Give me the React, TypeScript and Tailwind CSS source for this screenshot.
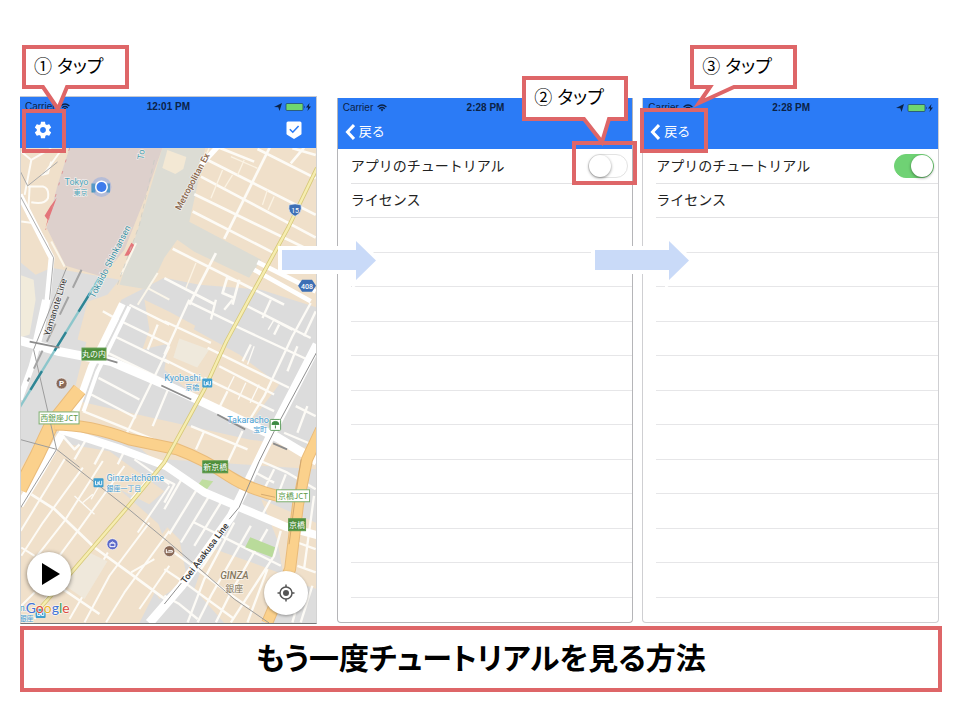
import type { ReactNode } from "react";

const sans = "font-['Liberation_Sans','Noto_Sans_CJK_JP',sans-serif]";

/* ---------- status bar ---------- */

function Wifi() {
  return (
    <svg viewBox="0 0 10 8" className="h-2 w-2.5" fill="none" stroke="#0b2246" strokeWidth="1.3" aria-hidden="true">
      <path d="M0.6 3 Q5 -1 9.4 3" />
      <path d="M2.2 4.7 Q5 2.2 7.8 4.7" />
      <path d="M3.6 5.6 L5 7.4 L6.4 5.6 Q5 4.6 3.6 5.6Z" fill="#0b2246" stroke="none" />
    </svg>
  );
}

function Battery() {
  return (
    <svg viewBox="0 0 38 10" className="h-2.5 w-[38px]" aria-hidden="true">
      <path d="M0 5 L8 1 L5.5 9 L4.3 5.2Z" fill="#0b2246" />
      <rect x="12" y="1.5" width="17" height="7" rx="1" fill="#6fd66f" stroke="#1c3f63" strokeWidth=".7" />
      <path d="M30.2 3.5 v3 q1.2 -1.5 0 -3Z" fill="#0b2246" />
      <path d="M35.5 1 L32 5.4 H34.2 L33.5 9 L37 4.4 H34.8Z" fill="#0b2246" />
    </svg>
  );
}

function StatusBar({ time }: { time: string }) {
  return (
    <div className="grid h-[19px] grid-cols-3 items-center pr-1 pl-[5px] text-[10px] leading-3 text-[#0b2246]">
      <span className="flex items-center gap-1">
        Carrier <Wifi />
      </span>
      <span className="text-center font-bold">{time}</span>
      <span className="flex justify-end">
        <Battery />
      </span>
    </div>
  );
}

/* ---------- annotations ---------- */

function Callout({ place, num, outline }: { place: string; num: string; outline: string }) {
  return (
    <div className={`pointer-events-none absolute z-20 h-11 w-[107px] ${place}`}>
      <svg viewBox="0 0 107 68" className="absolute top-0 left-0 h-[68px] w-[107px] overflow-visible" aria-hidden="true">
        <path d={outline} fill="#fff" stroke="#de6668" strokeWidth="4" />
      </svg>
      <p className="relative flex h-full items-center pl-3 text-lg leading-6 whitespace-pre text-black [font-feature-settings:'palt']">
        {num} タップ
      </p>
    </div>
  );
}

function Highlight({ place }: { place: string }) {
  return <div className={`pointer-events-none absolute z-10 border-4 border-[#de6668] ${place}`} />;
}

function StepArrow({ place }: { place: string }) {
  const d = "M0 9 H74 V0 L94 19.5 L74 39 V29 H0Z";
  return (
    <svg viewBox="0 0 94 39" className={`absolute z-10 h-[39px] w-[94px] overflow-visible ${place}`} aria-hidden="true">
      <path d={d} fill="#fff" stroke="#fff" strokeWidth="8" />
      <path d={d} fill="#c9daf8" />
    </svg>
  );
}

/* ---------- map ---------- */

const JP = "'Noto Sans CJK JP', sans-serif";

function Tile({ x, y, children }: { x: number; y: number; children: ReactNode }) {
  return <g transform={`translate(${x} ${y}) scale(0.33333)`}>{children}</g>;
}

function Sign({ x, y, w, text, solid }: { x: number; y: number; w: number; text: string; solid?: boolean }) {
  return (
    <g>
      <rect x={x + 0.5} y={y + 0.5} width={w - 1} height="12" fill={solid ? "#4f8f3c" : "#fff"} stroke={solid ? "#5f9c4e" : "#7fb070"} />
      <text x={x + w / 2} y={y + 9.5} fontSize="8" textAnchor="middle" fill={solid ? "#fff" : "#5d9a4a"} fontFamily={JP}>
        {text}
      </text>
    </g>
  );
}

function Metro({ x, y }: { x: number; y: number }) {
  return (
    <g>
      <rect x={x} y={y} width="10" height="9" rx="1" fill="#3f9fd0" />
      <path d={`M${x + 2} ${y + 2.5} v4 h2.4 v-3 l1.4 3 v-4 M${x + 6.4} ${y + 6.5} h1.8 v-4`} stroke="#fff" fill="none" strokeWidth=".9" />
    </g>
  );
}

function CityMap() {
  return (
    <svg
      viewBox="20 148 298 476"
      preserveAspectRatio="xMidYMid slice"
      className="block h-full w-full"
      role="img"
      aria-label="地図"
      fontFamily="Roboto, 'Noto Sans CJK JP', sans-serif"
    >
      <rect x="20" y="148" width="298" height="476" fill="#f0e0ca" />

      {/* city blocks */}
      <path d="M20 262 L36 275 L52 268 L120 280 L104 300 L90 330 L75 390 L40 440 L20 470Z" fill="#dddddd" />
      <path d="M20 275 L34 280 L36 300 L30 335 L20 338Z" fill="#f1ebdb" />
      <path d="M165 278 L200 285 L262 290 L318 308 V450 L250 440 L80 402 L100 350 L122 300Z" fill="#dcdcdc" />
      <path d="M88 302 L122 290 L110 335 L95 345 L78 340Z" fill="#f0e0ca" />
      <path d="M145 300 L170 312 L196 326 L186 350 L165 345 L143 350 L150 330Z" fill="#f0e0ca" />
      <path d="M170 340 L186 325 L240 355 L280 385 L252 422 L204 405 L165 370Z" fill="#f0e0ca" />
      <path d="M180 339 L210 350 L198 368 L174 358Z" fill="#efe9dc" />
      <path d="M165 460 L318 470 V624 H140 L172 560 L150 500 L146 486Z" fill="#dddddd" />
      <path d="M55 432 L130 440 L190 490 L165 530 L120 490Z" fill="#dddddd" />
      <path d="M70 445 L110 452 L165 492 L150 505 L100 480Z" fill="#f0e0ca" />
      <path d="M168 528 L180 540 L188 580 L160 600 L140 565Z" fill="#f0e0ca" />
      <path d="M210 548 L252 563 L283 575 L262 624 H225 L195 590Z" fill="#f0e0ca" />
      <path d="M262 500 L318 524 V590 L285 580 L278 540Z" fill="#f0e0ca" />
      <path d="M163 148 L206 148 L196 195 L190 222 L262 260 L250 278 L195 252 L178 240 L165 258 L150 290 L120 285 L140 225Z" fill="#dcdcd4" />
      <path d="M168 150 L187 157 L184 169 L176 174 L163 168Z" fill="#f3e8d4" />
      <path d="M70 148 L163 148 L144 202 L125 250 L103 277 L66 266 L47 228 L58 185Z" fill="#ddd0cc" />
      <path d="M51 206 L45 216 L48 220 L46 228 L57 198Z" fill="#e4757a" />
      <path d="M70 148 L46 230" stroke="#e08a8a" strokeWidth=".8" strokeDasharray="3 9" fill="none" />
      <path d="M132 243 L125 256 L129 256 L136 246Z" fill="#e4757a" />

      {/* minor streets */}
      <g stroke="#fdfbf6" fill="none" strokeLinejoin="round">
        <Tile x={15} y={145}>
          <path strokeWidth="6" d="M20 20 L50 45 L110 10 M50 45 L30 150 M90 85 L140 15 M80 90 L100 85 L110 50 M40 125 L85 125 Q105 130 100 160 Q90 180 50 172 M45 125 L40 215 M20 230 L60 235 L100 300" />
          <path strokeWidth="6" d="M365 295 L320 390 M430 385 L370 480 M400 430 L465 465 M110 290 L150 365" stroke="#fbf6ea" />
        </Tile>
        <Tile x={165} y={145}>
          <path
            strokeWidth="8"
            d="M130 45 L455 210 M110 95 L455 278 M90 148 L455 325 M85 200 L330 325 M165 8 L270 50 M280 12 L455 100 M420 8 L380 55 M385 10 L455 30 M318 5 L180 282 M25 312 L270 435 L360 480 M155 325 L75 480 M0 400 L150 478 M190 395 L175 445 L210 460 M225 405 L205 480 M190 400 L225 412"
          />
          <path strokeWidth="4" d="M175 75 L140 160 M205 90 L180 130 M240 45 L220 90 M200 35 L280 70 M310 135 L295 180 M330 155 L312 195 M95 355 L65 430 M135 8 L100 90" stroke="#fbf3e4" />
          <path strokeWidth="14" stroke="#fff" d="M280 352 L455 440 M270 375 L440 470" />
          <path strokeWidth="16" stroke="#fff" d="M165 0 L110 60" />
        </Tile>
        <Tile x={15} y={300}>
          <path
            strokeWidth="7"
            d="M345 15 L465 75 M320 65 L465 135 M300 110 L465 190 M280 160 L465 250 M252 235 L375 300 M230 285 L365 355 M205 335 L430 425 M430 75 L400 150 M465 140 L335 405 M465 260 L415 380 M265 35 L310 60 M150 400 L120 450 M140 405 L180 450 L195 435 M215 420 L180 480 M270 440 L240 495 M330 455 L310 495"
          />
        </Tile>
        <Tile x={165} y={300}>
          <path
            strokeWidth="7"
            d="M75 0 L0 165 M70 5 L215 75 M215 80 L430 180 M250 20 L440 115 M300 45 L385 90 M0 65 L140 130 M130 145 L375 265 M165 200 L330 285 M120 235 L330 335 M320 0 L295 55 M440 10 L385 110 L300 290 L260 355 M345 75 L330 105 M260 135 L235 185 M190 275 L160 335 M0 180 L130 245 M155 0 L140 60 M400 140 L370 215 M455 35 L420 110 M80 380 L250 450 M120 395 L95 450 M235 395 L190 490 M395 320 L455 350 M360 400 L455 440 M430 320 L400 400 M180 30 L205 0"
          />
          <path strokeWidth="4" d="M270 140 L250 195 M210 230 L190 270 M245 250 L222 300 M285 255 L258 310 M330 60 L312 90" />
        </Tile>
        <Tile x={15} y={460}>
          <path
            strokeWidth="6"
            d="M150 0 L18 215 M205 25 L85 190 L20 290 M265 5 L150 185 L60 300 M330 20 L190 215 L120 310 M405 190 L285 350 L210 490 M465 215 L330 400 L275 490 M280 280 L165 480 M235 265 L165 350 M60 400 L10 450 M100 410 L60 480 M360 0 L465 75 M400 60 L350 120 M465 80 L370 220 M20 265 L60 290 M465 320 L375 450 M350 340 L420 300"
          />
          <path strokeWidth="8" d="M50 105 L120 150 L240 265 L350 345 L465 430 M130 380 L255 465" />
          <path strokeWidth="4" d="M180 110 L240 165 M230 120 L265 60 M205 130 L235 105" />
        </Tile>
        <Tile x={165} y={460}>
          <path
            strokeWidth="7"
            d="M0 60 L30 75 L0 130 M60 45 L0 150 M95 95 L15 225 M135 110 L50 250 M170 130 L90 260 M90 190 L170 230 L290 290 L350 320 M210 190 L120 360 L70 490 M260 200 L140 410 L100 490 M310 210 L200 400 L155 490 M350 215 L330 290 L200 490 M310 330 L250 490 M30 280 L110 340 L190 400 L255 445 M0 330 L60 370 L210 480 M50 380 L0 450 M170 240 L110 330 M290 5 L370 40 L455 90 M275 40 L330 70 M330 30 L300 90 M365 45 L340 110 M320 120 L290 175 M400 250 L455 270 M400 320 L455 340 M450 110 L420 330 M405 420 L385 490 M445 380 L410 490 M0 410 L45 435 L100 480"
          />
        </Tile>
      </g>

      {/* parks and plazas */}
      <path d="M87 552 L108 562 L85 600 L66 587Z" fill="#efe8db" />
      <path d="M251 538 L276 548 L273 558 L246 548Z" fill="#b9db9a" />
      <path d="M203 480 L214 482 L206 492 L197 488Z" fill="#c0dea0" />

      {/* main streets */}
      <g stroke="#fff" fill="none" strokeLinejoin="round">
        <path d="M20 195 L52 258 L48 300 L42 330 L32 367 L20 400" strokeWidth="6" />
        <path d="M45 300 L35 345" strokeWidth="5" />
        <path d="M20 341 L60 352 L112 362 L168 386 L198 400 L278 438 L318 462" strokeWidth="9" />
        <path d="M123 304 L103 345 L92 367 L76 412" strokeWidth="7" />
        <path d="M130 307 L108 352 L98 372 L84 412" strokeWidth="4" />
        <path d="M118 318 L97 360" strokeWidth="4" />
        <path d="M318 345 L278 423 L260 460 L232 517 L182 587 L150 624" strokeWidth="9" />
        <path d="M60 430 L122 450 L167 467 L205 493 L245 510 L288 528 L318 536" strokeWidth="8" />
        <path d="M62 435 L42 470 L20 506" strokeWidth="8" />
      </g>

      {/* expressways */}
      <g fill="none">
        <path d="M80 390 L52 425 L38 455 L20 490" stroke="#e9bb7a" strokeWidth="15" />
        <path d="M80 390 L52 425 L38 455 L20 490" stroke="#fbd18c" strokeWidth="13" />
        <path d="M55 425 Q90 425 130 440 L178 450 Q205 460 230 477 Q250 490 280 497" stroke="#e9bb7a" strokeWidth="12" />
        <path d="M55 425 Q90 425 130 440 L178 450 Q205 460 230 477 Q250 490 280 497" stroke="#fbd18c" strokeWidth="10" />
        <path d="M322 430 L308 460 L299 505 L291 570 L268 624" stroke="#e9bb7a" strokeWidth="12" />
        <path d="M322 430 L308 460 L299 505 L291 570 L268 624" stroke="#fbd18c" strokeWidth="10" />
        <path d="M302 460 L296 500 L290 545 M262 495 L276 498" stroke="#c9a069" strokeWidth=".8" />
        <path d="M318 168 L289 228 L248 303 L227 342 L205 390 L165 463 L128 508 L73 572 L38 612" stroke="#d6c878" strokeWidth="4" />
        <path d="M318 168 L289 228 L248 303 L227 342 L205 390 L165 463 L128 508 L73 572 L38 612" stroke="#f6edb0" strokeWidth="2.4" />
      </g>

      {/* railways */}
      <g fill="none">
        <path d="M20 195 L54 258 L50 300" stroke="#999" strokeWidth=".8" />
        <path d="M67 268 L34 350 L57 450 L20 510 M20 440 L57 450 L80 468 M66 460 L127 508 L168 542 L195 565 L235 600 L270 624" stroke="#9d9d9d" strokeWidth="1" />
        <path d="M82 270 L28 382" stroke="#a4a4a4" strokeWidth="2" strokeDasharray="20 10" />
        <path d="M58 162 L28 186 L20 170" stroke="#aaa" strokeWidth="1" />
        <path d="M100 278 L20 408" stroke="#8cc6cb" strokeWidth="2.4" />
        <path d="M100 278 L20 408" stroke="#2f8594" strokeWidth="2.4" strokeDasharray="22 24" strokeDashoffset="-18" />
        <path d="M318 352 L275 432 L260 462 L240 508 L230 520 M182 584 L165 605" stroke="#8f8f8f" strokeWidth="1" />
        <path d="M30 342 L60 348 M98 357 L118 363 M162 386 L192 400 M218 415 L246 430 M274 444 L288 450" stroke="#8c8c8c" strokeWidth="1.8" />
        <path d="M155 160 L140 225 L118 285" stroke="#c7c9c4" strokeWidth=".7" strokeDasharray="5 4" />
      </g>

      {/* rail line and road names */}
      <g stroke="#fff" strokeOpacity=".6" strokeWidth="1.5" paintOrder="stroke">
        <text fontSize="9" fontWeight="500" fill="#8a674d" transform="translate(181 211) rotate(-62)">Metropolitan Ex</text>
        <text fontSize="9" fill="#4d9fae" transform="translate(144 160) rotate(-82)">To</text>
        <text fontSize="9" fill="#3c93a3" transform="translate(95 299) rotate(-63)">Tokaido Shinkansen</text>
        <text fontSize="9" fill="#333" transform="translate(50 337) rotate(-73)">Yamanote Line</text>
        <text fontSize="9" fontWeight="500" fill="#333" transform="translate(186 585) rotate(-53)">Toei Asakusa Line</text>
        <g fill="#49a0d3">
          <text x="65" y="185" fontSize="9" fill="#52a5b8">Tokyo</text>
          <text x="74" y="195" fontSize="7" fill="#52a5b8">東京</text>
          <text x="165" y="382" fontSize="9">Kyobashi</text>
          <text x="186" y="391" fontSize="7">京橋</text>
          <text x="228" y="424" fontSize="9">Takaracho</text>
          <text x="254" y="433" fontSize="7">宝町</text>
          <text x="107" y="482" fontSize="9">Ginza-itchōme</text>
          <text x="107" y="492" fontSize="7">銀座一丁目</text>
          <text x="20" y="622" fontSize="7">銀座</text>
          <text x="20" y="612" fontSize="9">n.</text>
        </g>
        <text x="221" y="580" fontSize="10" fontStyle="italic" fontWeight="500" fill="#85785f">GINZA</text>
        <text x="226" y="593" fontSize="9" fill="#85785f">銀座</text>
      </g>

      {/* signs and places */}
      <Sign x={82} y={348} w={25} text="丸の内" solid />
      <Sign x={39} y={412} w={41} text="西銀座JCT" />
      <Sign x={203} y={461} w={26} text="新京橋" solid />
      <Sign x={277} y={490} w={34} text="京橋JCT" />
      <Sign x={289} y={519} w={18} text="京橋" solid />
      <Metro x={203} y={379} />
      <Metro x={94} y={479} />
      <Metro x={36} y={610} />
      <rect x="271" y="420" width="10.5" height="11" rx="1" fill="#fff" stroke="#5e9e5e" />
      <path d="M276.3 429 v-3 M272.8 425 q0 -3 3.5 -3 q3.5 0 3.5 3Z" fill="#3d8a43" stroke="#3d8a43" />
      <circle cx="62" cy="384" r="5.5" fill="#8a6a58" stroke="#fff" strokeWidth=".6" />
      <text x="62" y="387" fontSize="8" fontWeight="700" textAnchor="middle" fill="#fff">P</text>
      <circle cx="113" cy="545" r="5.5" fill="#5a68c8" stroke="#fff" strokeWidth=".6" />
      <path d="M110.5 547.5 v-3.5 h5 v3.5Z M111.7 544 q1.3 -3 2.6 0" fill="none" stroke="#fff" />
      <circle cx="170" cy="552" r="5.5" fill="#8a6a58" stroke="#fff" strokeWidth=".6" />
      <path d="M167 554 v-4 M167 553 h6 v-1.5 h-4" fill="none" stroke="#fff" />
      <path d="M290 205 q6 -2 12 0 q1.5 8 -6 11.5 q-7.5 -3.5 -6 -11.5Z" fill="#3d6fb5" stroke="#dfe8f3" strokeWidth=".7" />
      <text x="296" y="213" fontSize="7" textAnchor="middle" fill="#fff">15</text>
      <path d="M303 280 H313 L317 286 L313 292 H303 L299 286Z" fill="#3d6fb5" />
      <text x="308" y="289" fontSize="7" fontWeight="500" textAnchor="middle" fill="#fff">408</text>
      <path d="M92 183.5 h4 v9 h-4Z M107 183.5 h3.5 v9 h-3.5Z" fill="#3c93b4" />
      <circle cx="102" cy="187" r="10" fill="#7d9fe8" fillOpacity=".4" />
      <circle cx="102" cy="187" r="6.5" fill="#fff" />
      <circle cx="102" cy="187" r="5" fill="#3f7cec" />
      <text x="26" y="614" fontSize="14" fontFamily="Lato, sans-serif" stroke="#fff" strokeWidth="1.5" strokeOpacity=".7" paintOrder="stroke">
        <tspan fill="#4274d8">G</tspan>
        <tspan fill="#dc4b3e">o</tspan>
        <tspan fill="#eeb32b">o</tspan>
        <tspan fill="#4274d8">g</tspan>
        <tspan fill="#3f9d55">l</tspan>
        <tspan fill="#dc4b3e">e</tspan>
      </text>
    </svg>
  );
}

/* ---------- screens ---------- */

function MapScreen() {
  return (
    <section className="relative min-w-0 flex-1" aria-label="地図">
      <header className="border-t border-r border-[#c5c9d2] bg-[#2b7bf6]">
        <StatusBar time="12:01 PM" />
        <div className="flex h-8 items-center justify-between px-[13px] pb-1">
          <button type="button" aria-label="設定">
            <svg viewBox="0 0 24 24" className="size-5" fill="#fff" aria-hidden="true">
              <path d="M19.43 12.98c.04-.32.07-.64.07-.98s-.03-.66-.07-.98l2.11-1.65c.19-.15.24-.42.12-.64l-2-3.46c-.12-.22-.39-.3-.61-.22l-2.49 1c-.52-.4-1.08-.73-1.69-.98l-.38-2.65C14.46 2.18 14.25 2 14 2h-4c-.25 0-.46.18-.49.42l-.38 2.65c-.61.25-1.17.59-1.69.98l-2.49-1c-.23-.09-.49 0-.61.22l-2 3.46c-.13.22-.07.49.12.64l2.11 1.65c-.04.32-.07.65-.07.98s.03.66.07.98l-2.11 1.65c-.19.15-.24.42-.12.64l2 3.46c.12.22.39.3.61.22l2.49-1c.52.4 1.08.73 1.69.98l.38 2.65c.03.24.24.42.49.42h4c.25 0 .46-.18.49-.42l.38-2.65c.61-.25 1.17-.59 1.69-.98l2.49 1c.23.09.49 0 .61-.22l2-3.46c.12-.22.07-.49-.12-.64l-2.11-1.65zM12 15.5c-1.93 0-3.500-1.570-3.500-3.500s1.570-3.500 3.500-3.500 3.500 1.570 3.500 3.500-1.570 3.500-3.500 3.500z" />
            </svg>
          </button>
          <button type="button" aria-label="完了">
            <svg viewBox="0 0 18 20" className="h-5 w-[18px]" aria-hidden="true">
              <path d="M3 1.5 H15 Q16.500 1.500 16.500 3 V13.500 Q16.500 14.500 15.500 15.100 L9 19 L2.500 15.100 Q1.500 14.500 1.500 13.500 V3 Q1.500 1.500 3 1.500Z" fill="#fff" />
              <path d="M4.800 9.200 L7.800 12.200 L13.600 6" fill="none" stroke="#2b7bf6" strokeWidth="1.600" />
            </svg>
          </button>
        </div>
      </header>
      <div className="relative h-[476px] border-x border-b border-x-[#d3d3d3] border-b-[#777]">
        <CityMap />
        <button
          type="button"
          aria-label="再生"
          className="absolute bottom-[27px] left-[6px] flex size-11 items-center justify-center rounded-full bg-white shadow-[0_1px_4px_rgba(0,0,0,0.5)]"
        >
          <svg viewBox="0 0 18 22" className="ml-1 h-[22px] w-[18px]" aria-hidden="true">
            <path d="M0 0 L18 11 L0 22Z" fill="#000" />
          </svg>
        </button>
        <button
          type="button"
          aria-label="現在地"
          className="absolute right-2 bottom-2 flex size-11 items-center justify-center rounded-full bg-white shadow-[0_1px_3px_rgba(0,0,0,0.35)]"
        >
          <svg viewBox="0 0 18 18" className="size-[18px]" fill="none" stroke="#555" strokeWidth="1.5" aria-hidden="true">
            <circle cx="9" cy="9" r="6" />
            <circle cx="9" cy="9" r="3" fill="#555" stroke="none" />
            <path d="M9 0.5 V3 M9 15 V17.5 M0.5 9 H3 M15 9 H17.5" />
          </svg>
        </button>
      </div>
      <Highlight place="top-[13px] left-[2px] h-11 w-11" />
      <Callout place="-top-[51px] left-[2px]" num="①" outline="M2 2 H105 V42 H45 L36 64 L21 42 H2Z" />
    </section>
  );
}

function SettingsScreen({ id, checked, frame, children }: { id: string; checked: boolean; frame: string; children: ReactNode }) {
  return (
    <section className={`relative mt-0.5 min-w-0 flex-1 ${frame}`} aria-label="設定">
      <div className="overflow-hidden rounded-b-sm border-x border-b border-inherit bg-white">
        <header className="bg-[#2b7bf6]">
          <StatusBar time="2:28 PM" />
          <button type="button" className="flex h-8 items-center gap-1 pb-0.5 pl-[7px] text-[13px] leading-4 text-white">
            <svg viewBox="0 0 10 16" className="h-4 w-2.5" fill="none" stroke="#fff" strokeWidth="3" aria-hidden="true">
              <path d="M9 1 L2.5 8 L9 15" />
            </svg>
            戻る
          </button>
        </header>
        <div className="flex h-[449px] flex-col pl-[13px] text-sm leading-5 text-[#222]">
          <div className="flex flex-1 items-center justify-between border-b border-[#e2e2e4] pr-1">
            <label htmlFor={id}>アプリのチュートリアル</label>
            <input
              id={id}
              type="checkbox"
              role="switch"
              defaultChecked={checked}
              className="relative h-6 w-10 appearance-none rounded-full border border-[#e3e3e3] bg-white before:absolute before:top-0 before:left-0 before:size-[22px] before:rounded-full before:bg-white before:shadow-[0_1px_3px_rgba(0,0,0,0.45)] checked:border-[#6fd274] checked:bg-[#6fd274] checked:before:left-4"
            />
          </div>
          <div className="flex flex-1 items-center border-b border-[#e2e2e4]">ライセンス</div>
          {Array.from({ length: 11 }, (_, i) => (
            <div key={i} className="flex-1 border-b border-[#e6e6e8]" />
          ))}
        </div>
        <div className="h-6" />
      </div>
      {children}
    </section>
  );
}

export default function App() {
  return (
    <main className={`min-h-screen bg-white pt-24 pb-7 pl-5 ${sans}`}>
      <div className="flex items-start pr-[21px]">
        <MapScreen />
        <div className="w-5 shrink-0" />
        <SettingsScreen id="tutorial-off" checked={false} frame="border-[#b5b5b8]">
          <StepArrow place="top-[143px] -left-[55px]" />
          <Highlight place="top-[43px] -right-1 h-11 w-[65px]" />
          <Callout place="-top-[22px] right-[4px]" num="②" outline="M2 2 H104 V43 H87 L80 66 L62 43 H2Z" />
        </SettingsScreen>
        <div className="w-[9px] shrink-0" />
        <SettingsScreen id="tutorial-on" checked frame="border-[#cfcfd2]">
          <StepArrow place="top-[143px] -left-[47px]" />
          <Highlight place="top-[10px] -left-[2px] h-[45px] w-[68px]" />
          <Callout place="-top-[53px] left-[48px]" num="③" outline="M2 2 H105 V42 H44 L9 58 L20 42 H2Z" />
        </SettingsScreen>
      </div>
      <h1 className="mt-0.5 mr-[18px] flex h-[66px] items-center justify-center border-4 border-[#de6668] text-3xl font-bold text-black [font-feature-settings:'palt']">
        もう一度チュートリアルを見る方法
      </h1>
    </main>
  );
}
